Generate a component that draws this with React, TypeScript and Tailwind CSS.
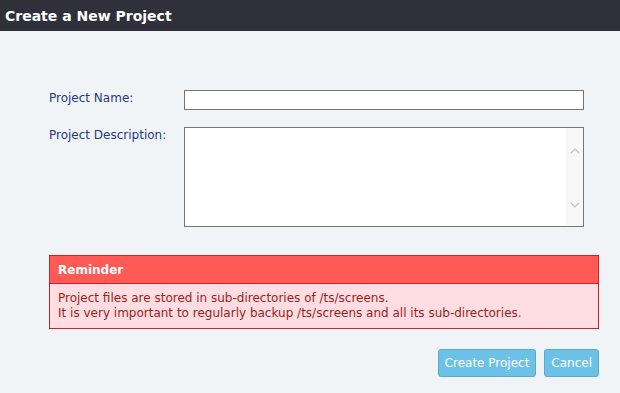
import { ChevronUp, ChevronDown } from "lucide-react";

export default function App() {
  return (
    <div className="w-[620px] h-[393px] bg-[#f1f4f6] font-['DejaVu_Sans',sans-serif] overflow-hidden">
      {/* Title bar */}
      <div className="h-[31px] bg-[#30303a] px-[5px] flex items-center">
        <h1 className="text-white font-bold text-[14px] leading-none">Create a New Project</h1>
      </div>

      <div className="pl-[49px] pr-[21px] pt-[59px]">
        {/* Form */}
        <div className="flex items-start">
          <label className="w-[135px] text-[12px] leading-[15px] text-[#253a7c] pt-[1px]">Project Name:</label>
          <input type="text" className="w-[400px] h-[20px] bg-white border border-[#767676] outline-none" />
        </div>
        <div className="flex items-start mt-[17px]">
          <label className="w-[135px] text-[12px] leading-[15px] text-[#253a7c] pt-[1px]">Project Description:</label>
          <div className="w-[400px] h-[100px] bg-white border border-[#767676] flex">
            <textarea className="flex-1 resize-none outline-none" />
            <div className="w-[17px] bg-[#f8f8f8] flex flex-col items-center justify-between pt-[15px] pb-[13px] text-[#c2c2c2]">
              <ChevronUp size={16} strokeWidth={1.6} />
              <ChevronDown size={16} strokeWidth={1.6} />
            </div>
          </div>
        </div>

        {/* Reminder */}
        <div className="mt-[28px] border border-[#c4262c]">
          <div className="h-[28px] bg-[#ff5a55] border-b border-[#c4262c] px-[8px] flex items-center">
            <span className="text-white font-bold text-[12px]">Reminder</span>
          </div>
          <div className="bg-[#ffdde1] px-[8px] pt-[7px] pb-[7px] text-[12px] leading-[15px] text-[#9a1d22]">
            <p>Project files are stored in sub-directories of /ts/screens.</p>
            <p>It is very important to regularly backup /ts/screens and all its sub-directories.</p>
          </div>
        </div>

        {/* Buttons */}
        <div className="flex justify-end gap-[8px] mt-[20px]">
          <button className="h-[28px] px-[6px] rounded-[3px] bg-[#6cc1e7] border border-[#58a9d3] text-white text-[12px]">
            Create Project
          </button>
          <button className="h-[28px] px-[6px] rounded-[3px] bg-[#6cc1e7] border border-[#58a9d3] text-white text-[12px]">
            Cancel
          </button>
        </div>
      </div>
    </div>
  );
}
